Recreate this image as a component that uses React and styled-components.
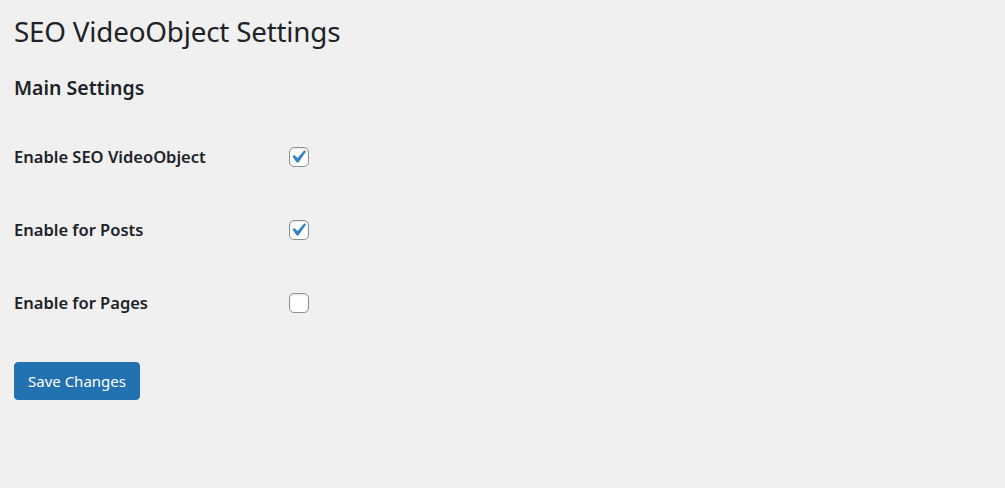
import React, { useState } from "react";
import styled, { createGlobalStyle } from "styled-components";

const GlobalStyle = createGlobalStyle`
  html, body {
    margin: 0;
    padding: 0;
    background: #f0f0f1;
  }
  body {
    font-family: "Noto Sans", "Open Sans", sans-serif;
    color: #1d2327;
  }
`;

const Wrap = styled.div`
  padding: 0 14px;
  min-height: 488px;
  box-sizing: border-box;
`;

const Title = styled.h1`
  margin: 0;
  padding: 11px 0 0;
  font-size: 27.8px;
  font-weight: 400;
  line-height: 40px;
  letter-spacing: -0.2px;
`;

const SectionTitle = styled.h2`
  margin: 25px 0 0;
  font-size: 19.5px;
  font-weight: 600;
  line-height: 24px;
`;

const Form = styled.form`
  display: flex;
  flex-direction: column;
  margin-top: 20px;
`;

const Row = styled.label`
  display: grid;
  grid-template-columns: 275px 20px;
  align-items: center;
  height: 73px;
  cursor: pointer;
`;

const Label = styled.span`
  font-size: 16.5px;
  font-weight: 600;
  line-height: 22px;
`;

const Box = styled.span`
  position: relative;
  width: 20px;
  height: 20px;
  box-sizing: border-box;
  border: 1px solid #8c8f94;
  border-radius: 5px;
  background: #fff;
  box-shadow: inset 0 1px 2px rgba(0, 0, 0, 0.1);
`;

const Tick = styled.svg`
  position: absolute;
  left: -5px;
  top: -4px;
  width: 26px;
  height: 26px;
`;

const HiddenInput = styled.input`
  display: none;
`;

const SaveButton = styled.button`
  margin-top: 23px;
  align-self: flex-start;
  height: 38px;
  padding: 0 13px;
  border: 1px solid #2271b1;
  border-radius: 4px;
  background: #2271b1;
  color: #fff;
  font-family: "Noto Sans", "Open Sans", sans-serif;
  font-size: 15px;
  line-height: 36px;
  cursor: pointer;
`;

function CheckRow({ label, checked, onToggle }) {
  return (
    <Row>
      <Label>{label}</Label>
      <Box>
        <HiddenInput type="checkbox" checked={checked} onChange={onToggle} />
        {checked && (
          <Tick viewBox="0 0 20 20">
            <path
              d="M14.83 4.89l1.34.94-5.81 8.38H9.02L5.78 9.67l1.34-1.25 2.57 2.4z"
              fill="#3582c4"
            />
          </Tick>
        )}
      </Box>
    </Row>
  );
}

export default function App() {
  const [opts, setOpts] = useState({ seo: true, posts: true, pages: false });
  const toggle = (key) => () => setOpts((o) => ({ ...o, [key]: !o[key] }));

  return (
    <Wrap>
      <GlobalStyle />
      <Title>SEO VideoObject Settings</Title>
      <SectionTitle>Main Settings</SectionTitle>
      <Form onSubmit={(e) => e.preventDefault()}>
        <CheckRow label="Enable SEO VideoObject" checked={opts.seo} onToggle={toggle("seo")} />
        <CheckRow label="Enable for Posts" checked={opts.posts} onToggle={toggle("posts")} />
        <CheckRow label="Enable for Pages" checked={opts.pages} onToggle={toggle("pages")} />
        <SaveButton type="submit">Save Changes</SaveButton>
      </Form>
    </Wrap>
  );
}
